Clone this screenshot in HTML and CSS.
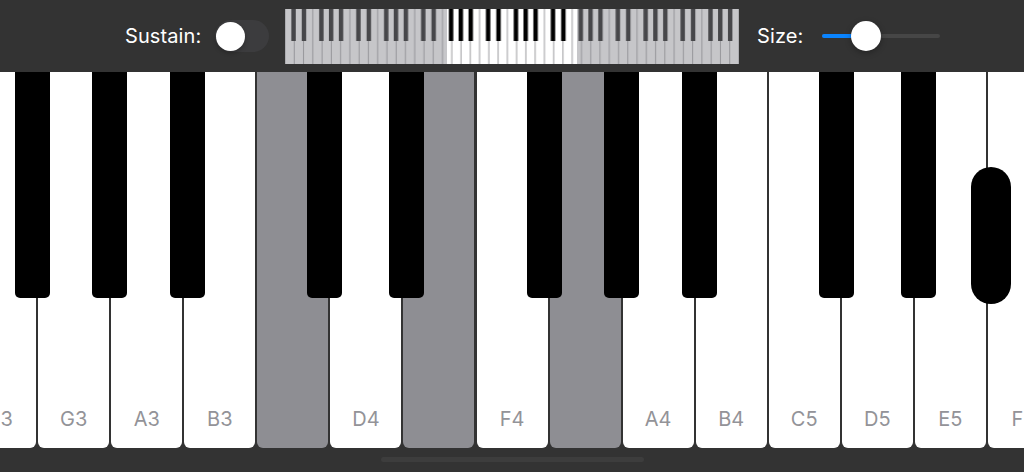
FILE: index.html
```html
<!DOCTYPE html>
<html lang="en">
<head>
<meta charset="utf-8">
<title>Piano</title>
<link rel="stylesheet" href="styles.css">
</head>
<body>
<div class="app">
  <header class="topbar">
    <span class="label sustain-label">Sustain:</span>
    <div class="switch"><div class="switch-knob"></div></div>
    <svg class="mini" width="454" height="55" viewBox="0 0 454 55">
      <defs>
        <pattern id="oct" width="64.857" height="55" patternUnits="userSpaceOnUse">
          <rect width="64.857" height="55" fill="#9c9c9f"/>
          <rect x="0.5" width="8.265" height="55" fill="#fff"/>
          <rect x="9.765" width="8.265" height="55" fill="#fff"/>
          <rect x="19.03" width="8.265" height="55" fill="#fff"/>
          <rect x="28.295" width="8.265" height="55" fill="#fff"/>
          <rect x="37.56" width="8.265" height="55" fill="#fff"/>
          <rect x="46.825" width="8.265" height="55" fill="#fff"/>
          <rect x="56.09" width="8.265" height="55" fill="#fff"/>
          <rect x="6.35" width="4.44" height="32" fill="#000"/>
          <rect x="16.75" width="4.44" height="32" fill="#000"/>
          <rect x="34.15" width="4.44" height="32" fill="#000"/>
          <rect x="43.91" width="4.44" height="32" fill="#000"/>
          <rect x="53.82" width="4.44" height="32" fill="#000"/>
        </pattern>
      </defs>
      <rect width="454" height="55" fill="url(#oct)"/>
      <rect width="162" height="55" fill="#8e8e93" fill-opacity="0.5"/>
      <rect x="292" width="162" height="55" fill="#8e8e93" fill-opacity="0.5"/>
    </svg>
    <span class="label size-label">Size:</span>
    <div class="slider">
      <div class="slider-fill"></div>
      <div class="slider-thumb"></div>
    </div>
  </header>

  <main class="piano">
    <div class="keys">
      <div class="white"><span class="name">F3</span><div class="black off-f"></div></div>
      <div class="white"><span class="name">G3</span><div class="black off-g"></div></div>
      <div class="white"><span class="name">A3</span><div class="black off-a"></div></div>
      <div class="white"><span class="name">B3</span></div>
      <div class="white pressed"><div class="black off-c"></div></div>
      <div class="white"><span class="name">D4</span><div class="black off-d"></div></div>
      <div class="white pressed"></div>
      <div class="white"><span class="name">F4</span><div class="black off-f"></div></div>
      <div class="white pressed"><div class="black off-g"></div></div>
      <div class="white"><span class="name">A4</span><div class="black off-a"></div></div>
      <div class="white"><span class="name">B4</span></div>
      <div class="white"><span class="name">C5</span><div class="black off-c"></div></div>
      <div class="white"><span class="name">D5</span><div class="black off-d"></div></div>
      <div class="white"><span class="name">E5</span></div>
      <div class="white"><span class="name">F5</span></div>
    </div>
    <div class="touch-pill"></div>
  </main>

  <footer class="bottombar">
    <div class="home-indicator"></div>
  </footer>
</div>
</body>
</html>
```

FILE: styles.css
```css
* { box-sizing: border-box; }

html, body {
  margin: 0;
  padding: 0;
  background: #333333;
  overflow: hidden;
}

.app {
  width: 1024px;
  height: 472px;
  display: flex;
  flex-direction: column;
  font-family: "Inter", "Liberation Sans", sans-serif;
}

/* ---------- top bar ---------- */
.topbar {
  height: 72px;
  flex: 0 0 72px;
  display: flex;
  align-items: center;
  padding-left: 125px;
  background: #333333;
}

.label {
  color: #ffffff;
  font-size: 20px;
  letter-spacing: 0.1px;
  line-height: 24px;
}

.sustain-label { width: 90px; }

.switch {
  position: relative;
  width: 54px;
  height: 32px;
  border-radius: 16px;
  background: #3c3c3e;
  margin-right: 16px;
}

.switch-knob {
  position: absolute;
  left: 1px;
  top: 1.5px;
  width: 29px;
  height: 29px;
  border-radius: 50%;
  background: #ffffff;
  box-shadow: 0 2px 4px rgba(0, 0, 0, 0.25);
}

.mini {
  display: block;
  flex: 0 0 454px;
  margin-right: 18px;
  margin-top: 1px;
}

.size-label { width: 65px; }

.slider {
  position: relative;
  width: 118px;
  height: 4px;
  border-radius: 2px;
  background: #464646;
}

.slider-fill {
  width: 44px;
  height: 4px;
  border-radius: 2px;
  background: #0a84ff;
}

.slider-thumb {
  position: absolute;
  left: 29px;
  top: -13px;
  width: 30px;
  height: 30px;
  border-radius: 50%;
  background: #ffffff;
  box-shadow: 0 2px 6px rgba(0, 0, 0, 0.3);
}

/* ---------- keyboard ---------- */
.piano {
  position: relative;
  height: 376px;
  flex: 0 0 376px;
  overflow: hidden;
}

.keys {
  display: flex;
  gap: 2.06px;
  height: 376px;
  margin-left: -34.8px;
}

.white {
  position: relative;
  flex: 0 0 71px;
  height: 376px;
  background: #ffffff;
  border-radius: 0 0 6px 6px;
  display: flex;
  align-items: flex-end;
  justify-content: center;
  padding-bottom: 19px;
}

.white.pressed { background: #8e8e93; }

.name {
  font-size: 20px;
  line-height: 20px;
  color: #939398;
}

.black {
  position: absolute;
  top: 0;
  width: 35px;
  height: 226px;
  background: #000000;
  border-radius: 0 0 5px 5px;
  z-index: 1;
}

.off-c { left: 50px; }
.off-d { left: 59px; }
.off-f { left: 50px; }
.off-g { left: 54px; }
.off-a { left: 59px; }

.touch-pill {
  position: absolute;
  left: 971px;
  top: 95px;
  width: 40px;
  height: 137px;
  border-radius: 20px;
  background: #000000;
  z-index: 2;
}

/* ---------- bottom ---------- */
.bottombar {
  flex: 1 1 auto;
  display: flex;
  justify-content: center;
  padding-top: 9px;
}

.home-indicator {
  width: 263px;
  height: 5px;
  border-radius: 3px;
  background: #3d3d3d;
}
```
